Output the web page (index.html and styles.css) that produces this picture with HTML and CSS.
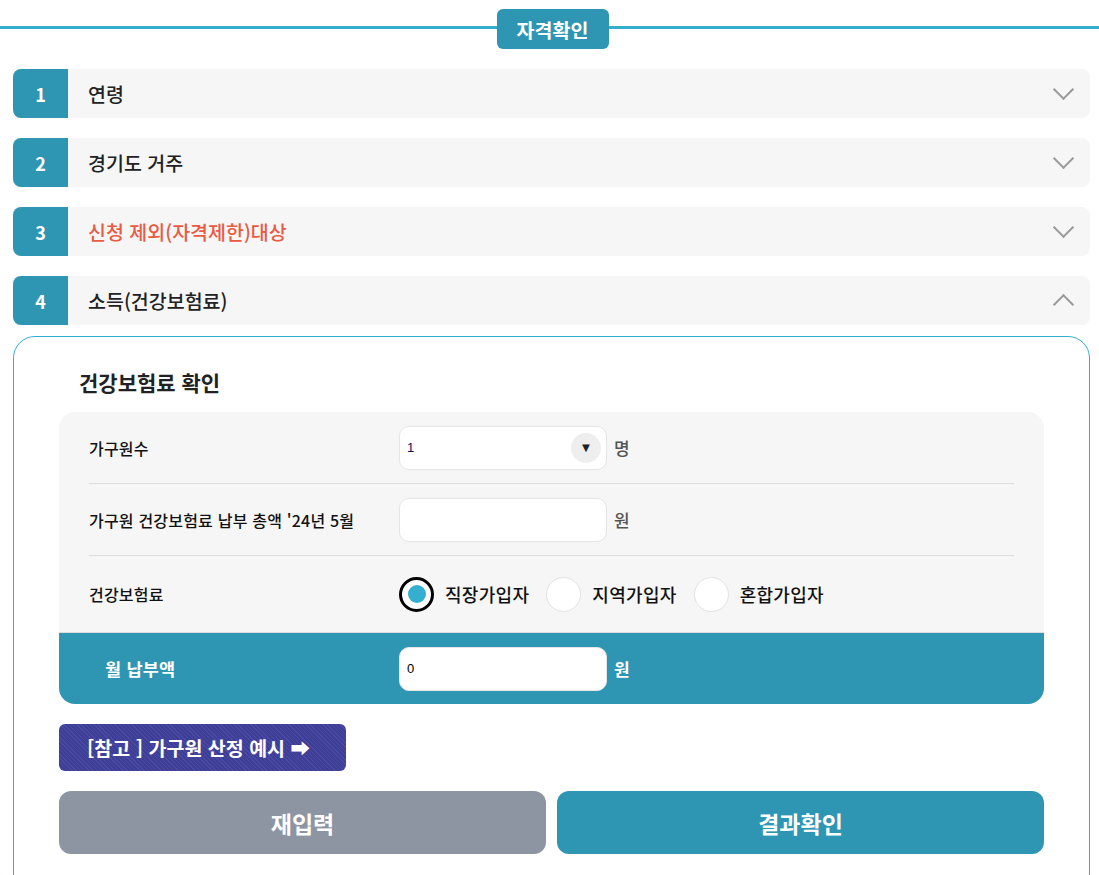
FILE: index.html
```html
<!DOCTYPE html>
<html lang="ko">
<head>
    <meta charset="UTF-8">
    <meta name="viewport" content="width=device-width, initial-scale=1.0">
    <title>자격확인</title>
    <link rel="stylesheet" href="styles.css">
</head>
<body>
    <!-- 상단 제목 -->
    <div class="head">
        <span class="badge">자격확인</span>
    </div>

    <div class="wrap">
        <div class="acc">
            <div class="num">1</div>
            <div class="acc-title">연령</div>
            <span class="chev"></span>
        </div>
        <div class="acc">
            <div class="num">2</div>
            <div class="acc-title">경기도 거주</div>
            <span class="chev"></span>
        </div>
        <div class="acc">
            <div class="num">3</div>
            <div class="acc-title red">신청 제외(자격제한)대상</div>
            <span class="chev"></span>
        </div>
        <div class="acc">
            <div class="num">4</div>
            <div class="acc-title">소득(건강보험료)</div>
            <span class="chev up"></span>
        </div>

        <!-- 열린 패널 -->
        <div class="panel">
            <h3 class="panel-title">건강보험료 확인</h3>
            <div class="box">
                <div class="row">
                    <div class="label">가구원수</div>
                    <div class="field">
                        <div class="input select">1<span class="arrow">&#9660;</span></div>
                        <span class="unit">명</span>
                    </div>
                </div>
                <div class="row">
                    <div class="label">가구원 건강보험료 납부 총액 '24년 5월</div>
                    <div class="field">
                        <div class="input"></div>
                        <span class="unit">원</span>
                    </div>
                </div>
                <div class="row">
                    <div class="label">건강보험료</div>
                    <div class="field radios">
                        <span class="radio on"></span><span class="rtext">직장가입자</span>
                        <span class="radio"></span><span class="rtext">지역가입자</span>
                        <span class="radio"></span><span class="rtext">혼합가입자</span>
                    </div>
                </div>
                <div class="row total">
                    <div class="label">월 납부액</div>
                    <div class="field">
                        <div class="input">0</div>
                        <span class="unit">원</span>
                    </div>
                </div>
            </div>

            <a href="#" class="ref-btn">[참고 ] 가구원 산정 예시 ➡</a>

            <div class="btns">
                <a href="#" class="btn gray">재입력</a>
                <a href="#" class="btn teal">결과확인</a>
            </div>
        </div>
    </div>
</body>
</html>
```

FILE: styles.css
```css
*{
    margin: 0;
    padding: 0;
    box-sizing: border-box;
}
body{
    font-family: "Noto Sans CJK KR", "Noto Sans", sans-serif;
    color: #222;
    background: #fff;
    height: 875px;
    overflow: hidden;
}
a{
    text-decoration: none;
}

/* 상단 라인 + 배지 */
.head{
    position: relative;
    height: 60px;
    padding-top: 9px;
    display: flex;
    justify-content: center;
}
.head::before{
    content: "";
    position: absolute;
    left: 0;
    right: 0;
    top: 26px;
    height: 3px;
    background: #33aecc;
}
.badge{
    position: relative;
    display: flex;
    align-items: center;
    justify-content: center;
    width: 112px;
    height: 40px;
    margin-left: 6px;
    background: #2e96b3;
    color: #fff;
    font-size: 19.5px;
    font-weight: 700;
    border-radius: 6px;
}

.wrap{
    padding: 9px 9px 0 13px;
}

/* 아코디언 */
.acc{
    display: flex;
    align-items: center;
    height: 49px;
    margin-bottom: 20px;
    background: #f6f6f6;
    border-radius: 8px;
    overflow: hidden;
    position: relative;
}
.num{
    width: 55px;
    height: 100%;
    background: #2e96b3;
    color: #fff;
    font-size: 18px;
    font-weight: 700;
    display: flex;
    align-items: center;
    justify-content: center;
}
.acc-title{
    padding-left: 20px;
    font-size: 19.5px;
    font-weight: 500;
    color: #222;
    flex: 1;
}
.acc-title.red{
    color: #ea5a43;
}
.chev{
    width: 15px;
    height: 15px;
    border-right: 2px solid #999;
    border-bottom: 2px solid #999;
    transform: rotate(45deg);
    margin-right: 19px;
    margin-top: -9px;
}
.chev.up{
    transform: rotate(-135deg);
    margin-top: 7px;
}

/* 패널 */
.panel{
    border: 1px solid #33aecc;
    border-radius: 22px;
    margin-top: -9px;
    padding: 30px 45px 40px 45px;
    height: 560px;
}
.panel-title{
    font-size: 21px;
    font-weight: 700;
    color: #222;
    padding-left: 20px;
    margin-bottom: 15px;
}
.box{
    background: #f6f6f6;
    border-radius: 16px;
    overflow: hidden;
}
.row{
    display: flex;
    align-items: center;
    height: 72px;
    margin: 0 30px;
    border-bottom: 1px solid #ddd;
}
.label{
    width: 310px;
    font-size: 16px;
    letter-spacing: 0.2px;
    font-weight: 500;
    color: #111;
}
.field{
    display: flex;
    align-items: center;
}
.input{
    width: 208px;
    height: 44px;
    background: #fff;
    border: 1px solid #e5e5e5;
    border-radius: 10px;
    padding: 0 7px;
    display: flex;
    align-items: center;
    font-family: "Liberation Sans", sans-serif;
    font-size: 13px;
    color: #000;
    position: relative;
}
.select{
    color: #0a0a60;
}
.arrow{
    position: absolute;
    right: 5px;
    top: 6px;
    width: 30px;
    height: 30px;
    border-radius: 50%;
    background: #eee;
    color: #222;
    font-size: 13px;
    display: flex;
    align-items: center;
    justify-content: center;
}
.unit{
    margin-left: 7px;
    font-size: 17px;
    font-weight: 500;
    color: #555;
}
.radios .radio{
    width: 35px;
    height: 35px;
    border-radius: 50%;
    background: #fff;
    border: 1px solid #e2e2e2;
    display: flex;
    align-items: center;
    justify-content: center;
}
.radios .radio.on{
    border: 3px solid #000;
}
.radios .radio.on::after{
    content: "";
    width: 18px;
    height: 18px;
    border-radius: 50%;
    background: #34afd0;
}
.rtext{
    font-size: 18px;
    letter-spacing: 0.3px;
    font-weight: 500;
    color: #111;
    margin: 0 17px 0 11px;
}
.row:nth-child(3){
    border-bottom: none;
    height: 76px;
}
.row.total{
    margin: 0;
    padding: 0 30px;
    height: 72px;
    background: #2e96b3;
    border-bottom: none;
    border-top: 1px solid #ddd;
}
.row.total .label{
    color: #fff;
    font-weight: 700;
    font-size: 17.5px;
    padding-left: 16px;
}
.row.total .unit{
    color: #fff;
    font-weight: 700;
}

/* 참고 버튼 */
.ref-btn{
    display: inline-flex;
    align-items: center;
    height: 47px;
    margin-top: 20px;
    padding: 0 36px 0 28px;
    border-radius: 6px;
    color: #fff;
    font-size: 19.5px;
    font-weight: 700;
    background: repeating-linear-gradient(45deg, #4a4aa6 0 1px, #3e3e94 1px 3px);
}

.btns{
    display: flex;
    gap: 11px;
    margin-top: 20px;
}
.btn{
    flex: 1;
    height: 63px;
    border-radius: 12px;
    color: #fff;
    font-size: 23px;
    font-weight: 700;
    display: flex;
    align-items: center;
    justify-content: center;
}
.btn.gray{
    background: #8e95a2;
}
.btn.teal{
    background: #2e96b3;
}
```
